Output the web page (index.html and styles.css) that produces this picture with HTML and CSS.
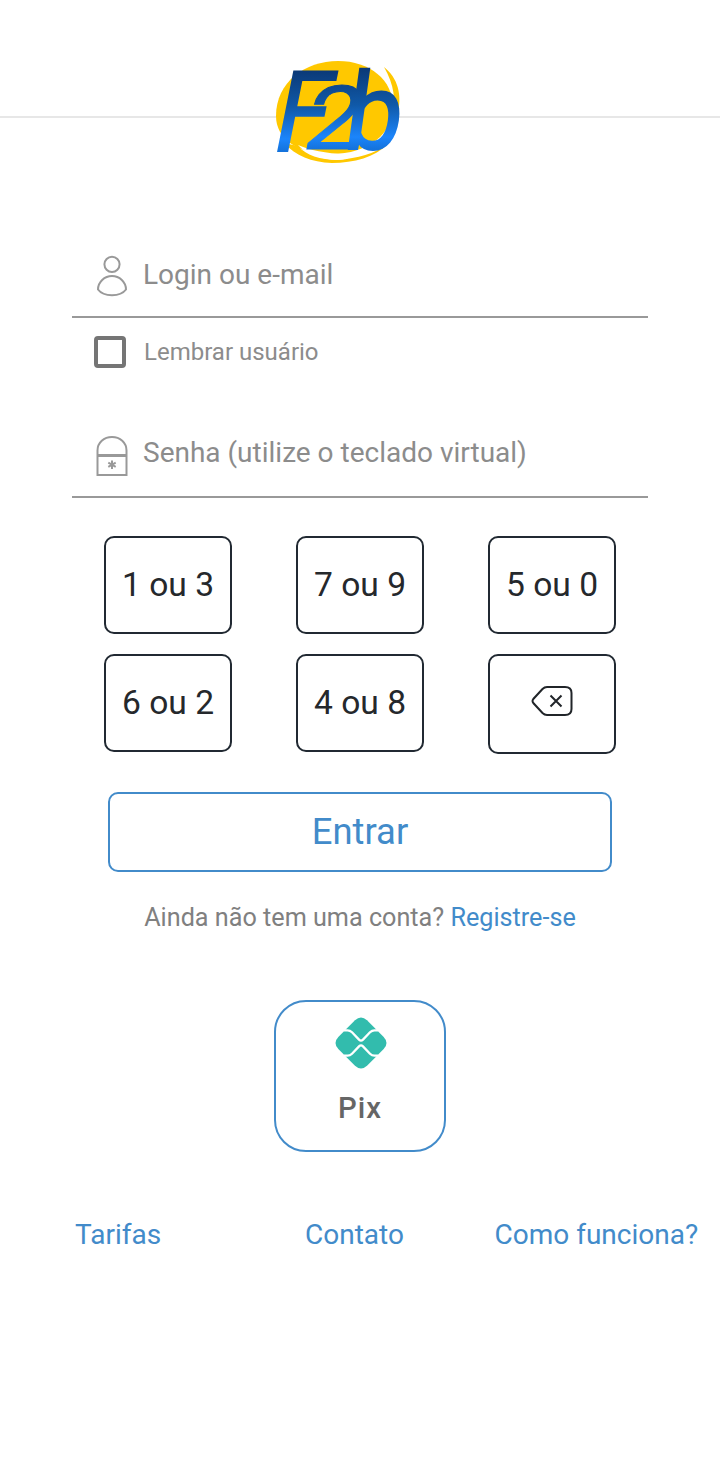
FILE: index.html
```
<!DOCTYPE html>
<html lang="pt-BR">
<head>
  <meta charset="UTF-8" />
  <meta name="viewport" content="width=device-width, initial-scale=1" />
  <title>F2b</title>
  <link rel="stylesheet" href="styles.css">
</head>
<body>
  <header class="topo">
    <svg class="logo" viewBox="270 55 140 115" role="img" aria-label="F2b">
      <defs>
        <linearGradient id="azul" gradientUnits="userSpaceOnUse" x1="0" y1="-80" x2="0" y2="0">
          <stop offset="0" stop-color="#0b3a78" />
          <stop offset="0.45" stop-color="#1059a8" />
          <stop offset="0.85" stop-color="#1b85fb" />
          <stop offset="1" stop-color="#1473dc" />
        </linearGradient>
      </defs>
      <path fill="#ffc800" d="M276 116C276 82 305 61 338 61C370 61 393 80 393 107C393 133 369 154 331 154C298 154 276 139 276 116Z" />
      <path fill="#ffc800" d="M384 67C398 78 402 95 398 112L391 119C397 102 394 84 384 67Z" />
      <path fill="#ffc800" d="M284 143L298 146C306 155 320 160 338 160C358 158 374 154 388 144C375 157 354 163 332 163C311 162 296 156 284 143Z" />
      <path fill="#fff" d="M298 145C312 151 336 156 360 153C352 157 345 160 337 160C320 159 306 154 298 145Z" />
      <g class="logo-letras" fill="url(#azul)">
        <text font-size="112" stroke-width="2" transform="matrix(.88 0 -.2 1 270 151)">F</text>
        <text font-size="89" stroke-width="1" transform="matrix(1.13 0 -.2 1 301 149)">2</text>
        <text font-size="107" stroke-width="2" transform="matrix(.94 0 -.14 1 342 149)">b</text>
      </g>
    </svg>
  </header>

  <form class="login">
    <div class="campo">
      <svg class="icone" width="32" height="42" viewBox="0 0 32 42">
        <circle cx="16" cy="9.300" r="7.600" />
        <path d="M16 21C8.500 21 2 27 2 34.500C5 38.500 10 40.200 16 40.200S27 38.500 30 34.500C30 27 23.500 21 16 21Z" />
      </svg>
      <input type="text" placeholder="Login ou e-mail" />
    </div>

    <label class="lembrar">
      <input type="checkbox" />
      <span>Lembrar usuário</span>
    </label>

    <div class="campo campo-senha">
      <svg class="icone" width="32" height="42" viewBox="0 0 32 42">
        <path d="M1.500 40V15.500C1.500 7.500 8 2 16 2S30.500 7.500 30.500 15.500V40Z" />
        <path class="grosso" d="M2 20.500H30" />
        <path d="M16 25.500V34M12.300 27.700L19.700 31.800M19.700 27.700L12.300 31.800" />
      </svg>
      <input type="text" placeholder="Senha (utilize o teclado virtual)" readonly />
    </div>

    <div class="teclado">
      <button type="button">1 ou 3</button>
      <button type="button">7 ou 9</button>
      <button type="button">5 ou 0</button>
      <button type="button">6 ou 2</button>
      <button type="button">4 ou 8</button>
      <button type="button" class="apagar" aria-label="Apagar">
        <svg width="42" height="32" viewBox="0 0 42 32">
          <path d="M16 2H34Q40.500 2 40.500 8V24Q40.500 30 34 30H16Q13.500 30 11.500 28L2.300 18Q.8 16 2.300 14L11.500 4Q13.500 2 16 2ZM19.500 10.500L30.500 21.500M30.500 10.500L19.500 21.500" />
        </svg>
      </button>
    </div>

    <button type="button" class="entrar">Entrar</button>
  </form>

  <p class="registro">Ainda não tem uma conta? <a href="#">Registre-se</a></p>

  <a class="pix" href="#">
    <svg width="52" height="52" viewBox="0 0 52 52">
      <path class="pix-forma" d="M20 3.300Q26 -2.300 32 3.300L48.700 20Q54.300 26 48.700 32L32 48.700Q26 54.300 20 48.700L3.300 32Q-2.300 26 3.300 20Z" />
      <path class="pix-linha" d="M9 13.300H12.500Q15 13.300 17 15.300L24 22.600Q26 24.600 28 22.600L35 15.300Q37 13.300 39.500 13.300H43M9 38.700H12.500Q15 38.700 17 36.700L24 29.400Q26 27.400 28 29.400L35 36.700Q37 38.700 39.500 38.700H43" />
    </svg>
    <span>Pix</span>
  </a>

  <nav class="links">
    <a href="#">Tarifas</a>
    <a href="#">Contato</a>
    <a href="#">Como funciona?</a>
  </nav>
</body>
</html>
```
FILE: styles.css
```
* {
  box-sizing: border-box;
}

body {
  margin: 0;
  min-height: 1480px;
  background: #fff;
  color: #808080;
  font-family: Roboto, Arial, sans-serif;
}

a {
  color: #428bca;
  text-decoration: none;
}

button {
  padding: 0;
  background: #fff;
  font-family: inherit;
  cursor: pointer;
}

/* Topo */
.topo {
  position: relative;
  height: 118px;
  border-bottom: 2px solid #e7e7e7;
}

.logo {
  position: absolute;
  left: 270px;
  top: 55px;
  width: 140px;
  height: 115px;
  overflow: visible;
}

.logo-letras {
  font-family: Roboto, sans-serif;
  font-weight: 400;
  stroke: url(#azul);
}

/* Login */
.login {
  width: 576px;
  margin: 114px auto 0;
}

.campo {
  display: flex;
  height: 86px;
  padding: 23px 0 0 24px;
  border-bottom: 2px solid #999;
}

.icone {
  flex: none;
  margin-right: 15px;
  fill: none;
  stroke: #999;
  stroke-width: 2;
}

.icone .grosso {
  stroke-width: 3;
}

.campo input {
  flex: 1;
  height: 38px;
  padding: 0;
  border: 0;
  outline: none;
  background: none;
  color: #858585;
  font-family: inherit;
  font-size: 28px;
}

.campo input::placeholder {
  color: #8c8c8c;
  opacity: 1;
}

.lembrar {
  display: flex;
  align-items: center;
  gap: 18px;
  height: 32px;
  margin: 18px 0 0 22px;
  color: #8c8c8c;
  font-size: 24px;
}

.lembrar input {
  appearance: none;
  width: 32px;
  height: 32px;
  margin: 0;
  border: 4px solid #757575;
  border-radius: 4px;
}

.lembrar input:checked {
  background: #757575;
}

.campo-senha {
  margin-top: 44px;
}

.campo-senha input {
  height: 34px;
}

.teclado {
  display: grid;
  grid-template-columns: repeat(3, 128px);
  gap: 20px 64px;
  justify-content: center;
  align-items: start;
  margin-top: 38px;
}

.teclado button {
  height: 98px;
  padding-bottom: 2px;
  border: 2px solid #212932;
  border-radius: 10px;
  color: #25282c;
  font-size: 33.6px;
}

.teclado .apagar {
  height: 100px;
  padding: 0 0 12px;
}

.apagar svg {
  vertical-align: middle;
  fill: none;
  stroke: #212529;
  stroke-width: 2;
}

.entrar {
  display: block;
  width: 504px;
  height: 80px;
  margin: 38px auto 0;
  padding-bottom: 2px;
  border: 2px solid #428bca;
  border-radius: 10px;
  color: #428bca;
  font-size: 36.4px;
}

.registro {
  margin: 30px 0 0;
  font-size: 25.2px;
  line-height: 32px;
  text-align: center;
}

/* Pix */
.pix {
  display: flex;
  flex-direction: column;
  align-items: center;
  width: 172px;
  height: 152px;
  margin: 66px auto 0;
  padding: 15px 0 0 2px;
  border: 2px solid #428bca;
  border-radius: 32px;
  color: #666;
  font-size: 29.4px;
  font-weight: 500;
  letter-spacing: 1px;
}

.pix span {
  margin: 22px 2px 0 0;
}

.pix-forma {
  fill: #32bcad;
}

.pix-linha {
  fill: none;
  stroke: #fff;
  stroke-width: 2.3;
}

.links {
  display: flex;
  margin: 67px 0 0 75px;
  font-size: 28px;
  line-height: 32px;
  white-space: nowrap;
}

.links a:nth-child(1) {
  width: 230px;
}

.links a:nth-child(2) {
  width: 189.5px;
}
```
